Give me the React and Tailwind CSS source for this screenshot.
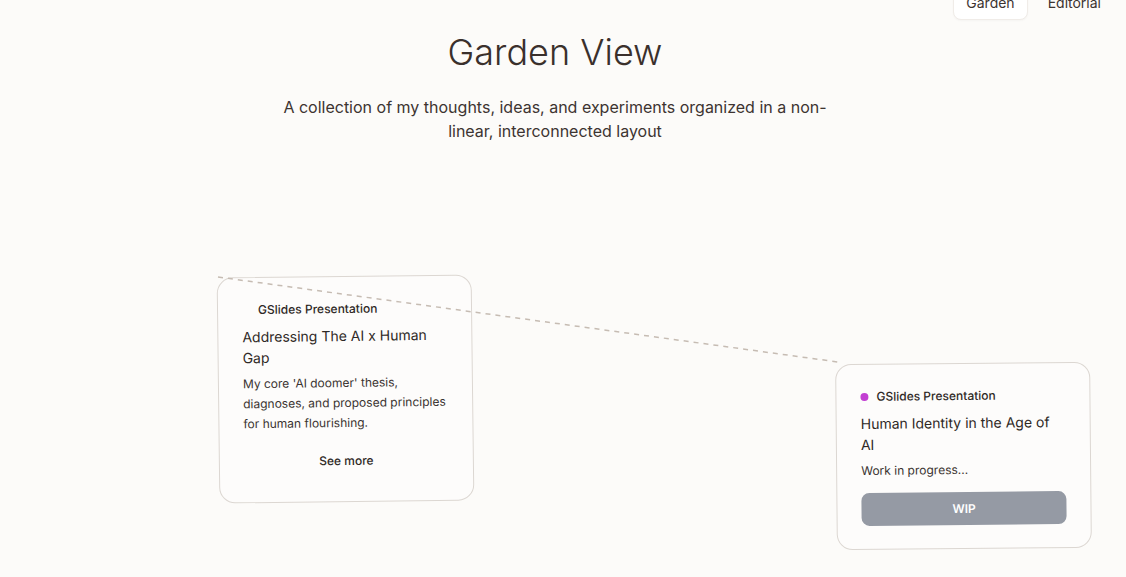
import React from 'react';

// Notes placed on the garden canvas (positions are the content here)
const notes = [
    {
        id: 'ai-human-gap',
        kind: 'GSlides Presentation',
        dot: 'bg-transparent',
        title: 'Addressing The AI x Human Gap',
        body: "My core 'AI doomer' thesis, diagnoses, and proposed principles for human flourishing.",
        action: 'more',
        pos: 'left-[218px] top-[276px] h-[226px] -rotate-[0.7deg]',
    },
    {
        id: 'human-identity',
        kind: 'GSlides Presentation',
        dot: 'bg-[#c23fd2]',
        title: 'Human Identity in the Age of AI',
        body: 'Work in progress...',
        action: 'wip',
        pos: 'left-[836px] top-[363px] h-[186px] -rotate-[0.55deg]',
    },
];

const NoteCard = ({ note }) => (
    <div className={`absolute w-[255px] rounded-2xl border border-[#dcd7d2] bg-[#fdfcfb] p-6 ${note.pos}`}>
        <div className="flex items-center gap-2 text-[12px] leading-4 font-medium text-[#2f2926]">
            <span className={`h-2 w-2 rounded-full ${note.dot}`} />
            {note.kind}
        </div>
        <h3 className="mt-2 text-[14px] leading-[21px] font-normal text-[#2f2926]">{note.title}</h3>
        <p className="mt-1.5 text-[12px] leading-5 text-[#3a3330]">{note.body}</p>
        {note.action === 'more' ? (
            <button className="mt-3 h-8 w-full text-[12px] font-medium text-[#2f2926]">See more</button>
        ) : (
            <button className="mt-3 h-[33px] w-full rounded-lg bg-[#959aa4] text-[12px] font-semibold text-white">WIP</button>
        )}
    </div>
);

const App = () => {
    return (
        <div className="relative h-[577px] w-full overflow-hidden bg-[#fcfbf9] font-['Inter','Noto_Sans',sans-serif] text-[#3d3431]">
            {/* --- Top nav (page is scrolled slightly) --- */}
            <nav className="-mt-[14px] flex justify-end gap-2 pr-[13px]">
                <button className="rounded-lg border border-[#f0ece8] bg-white px-3 py-1.5 text-[14px] leading-5 text-[#3d3431] shadow-[0_1px_2px_rgba(0,0,0,0.03)]">Garden</button>
                <button className="rounded-lg px-3 py-1.5 text-[14px] leading-5 text-[#3d3431]">Editorial</button>
            </nav>

            {/* --- Header --- */}
            <header className="flex flex-col items-center pr-4 text-center">
                <h1 className="mt-[12px] text-[36px] leading-10 font-light text-[#3a302c]">Garden View</h1>
                <p className="mt-[23px] max-w-xl text-[16px] leading-6 text-[#3d3431]" style={{ hyphens: 'manual' }}>
                    A collection of my thoughts, ideas, and experiments organized in a non-linear, interconnected layout
                </p>
            </header>

            {/* --- Free canvas --- */}
            {notes.map(note => <NoteCard key={note.id} note={note} />)}

            <svg className="pointer-events-none absolute inset-0 h-full w-full">
                <line x1="218" y1="277" x2="838" y2="362" stroke="#c6bcb3" strokeWidth="1.5" strokeDasharray="5 5" />
            </svg>
        </div>
    );
};

export default App;
